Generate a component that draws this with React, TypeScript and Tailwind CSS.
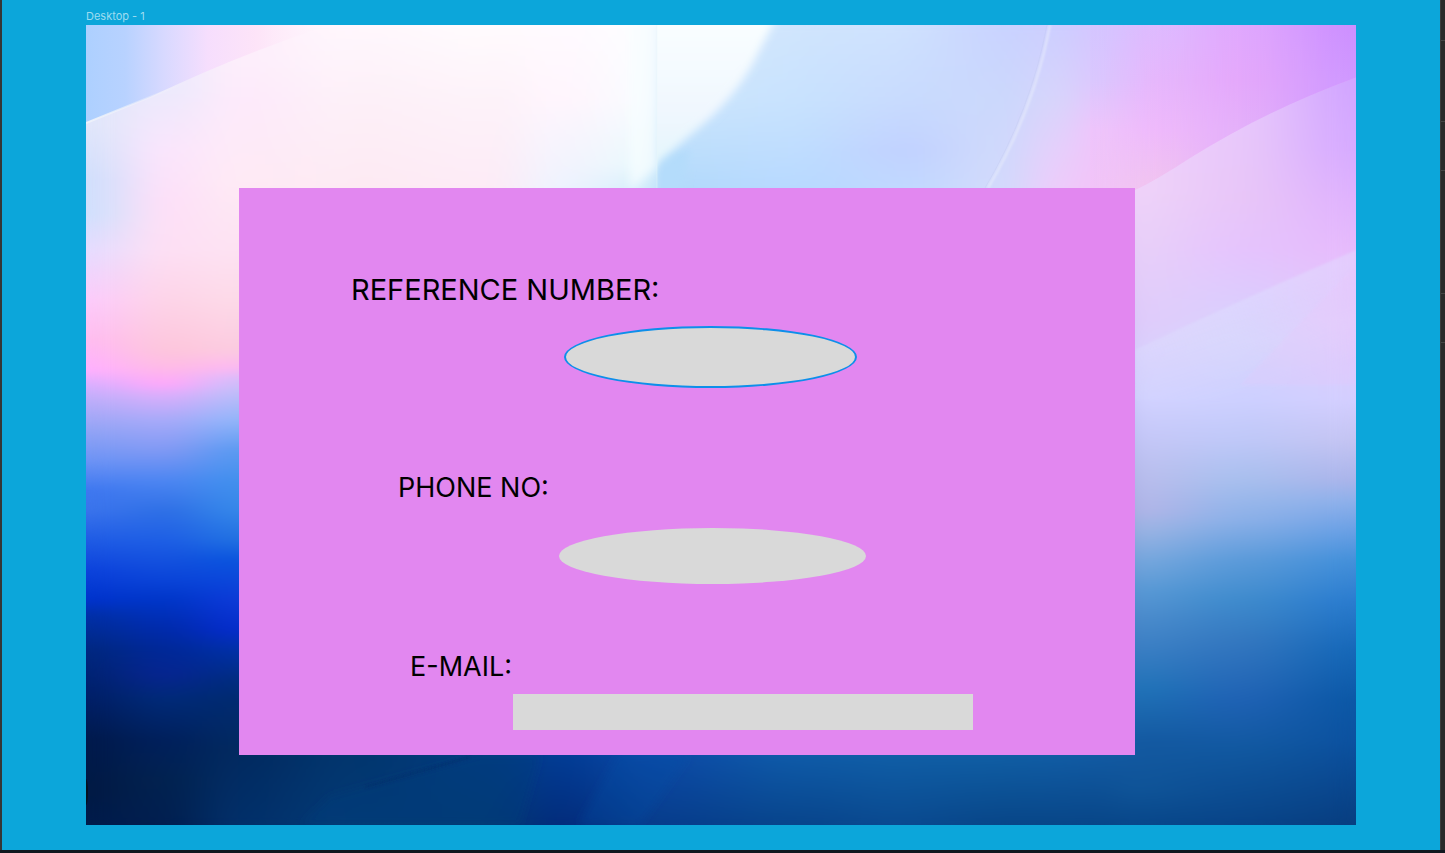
import React, { useId } from "react";

type Stop = [number, string];
type Column = { x: number; stops: Stop[] };

const TOP = 25;
const BOTTOM = 825;

const wallpaper: Column[] = [
  { x: 86, stops: [[125, "#dfe6fa"], [180, "#cfdffc"], [215, "#cfe0fd"], [250, "#e5dcff"], [300, "#fccbfb"], [340, "#ffbcf0"], [370, "#ffb0ff"], [385, "#d8b0ff"], [400, "#bdaefa"], [430, "#93a4f5"], [460, "#6e94f5"], [490, "#3f78f0"], [510, "#3b74ec"], [540, "#205ce5"], [570, "#0d43dc"], [600, "#0033cc"], [615, "#0030a8"], [650, "#002880"], [700, "#001f66"], [740, "#001a4c"], [790, "#021a44"], [825, "#001b4b"]] },
  { x: 165, stops: [[90, "#eceafc"], [150, "#fae5fc"], [200, "#fde0f8"], [250, "#fddff4"], [300, "#fdd4e8"], [350, "#fdc6dc"], [365, "#febde4"], [384, "#ffa8fb"], [395, "#dcaefb"], [420, "#a8aaf9"], [450, "#8199f4"], [480, "#4e86f2"], [510, "#2f70e6"], [540, "#1e5fe5"], [580, "#0a44d8"], [600, "#0036c8"], [625, "#002cb0"], [650, "#002898"], [675, "#062590"], [700, "#002a78"], [740, "#00205c"], [780, "#022250"], [825, "#011f50"]] },
  { x: 239, stops: [[60, "#fdeefb"], [100, "#fdeafb"], [180, "#feeaf5"], [250, "#fde2f2"], [300, "#fddae8"], [350, "#fccbe0"], [368, "#fdb8f2"], [378, "#dbbcfb"], [390, "#c4befa"], [420, "#92b5fa"], [450, "#5b9af2"], [480, "#4290ee"], [510, "#3587ea"], [540, "#2070e2"], [560, "#0a54de"], [600, "#0c3ad8"], [630, "#042ccc"], [650, "#0030a8"], [680, "#002c80"], [700, "#002a70"], [750, "#022a60"], [825, "#02306a"]] },
  { x: 350, stops: [[25, "#fff7fd"], [100, "#fdf0f8"], [188, "#fdeaf3"], [755, "#02366e"], [825, "#033a75"]] },
  { x: 490, stops: [[25, "#fffbfd"], [100, "#fdf2f9"], [188, "#fdebf6"], [755, "#023c80"], [825, "#023a75"]] },
  { x: 560, stops: [[25, "#fffaff"], [100, "#fff5fd"], [188, "#eef3fe"], [755, "#023c95"], [825, "#032c7c"]] },
  { x: 656, stops: [[25, "#fdfeff"], [100, "#f8fcff"], [165, "#e8f9fc"], [188, "#d4eefb"], [755, "#0c4aa6"], [825, "#073d8c"]] },
  { x: 658, stops: [[25, "#d8ebfc"], [100, "#cce6fc"], [188, "#b2dafb"], [755, "#0c4aa6"], [825, "#073d8c"]] },
  { x: 800, stops: [[25, "#d0e5fd"], [100, "#c8e2fe"], [188, "#b8d9ff"], [755, "#0f5ba8"], [825, "#08458c"]] },
  { x: 900, stops: [[25, "#cfe2fe"], [100, "#c8dbfe"], [150, "#c1d2ff"], [188, "#c0d8ff"], [755, "#105ea6"], [825, "#0a4a90"]] },
  { x: 1000, stops: [[25, "#c9d3ff"], [100, "#cbd8fc"], [188, "#d2dafc"], [755, "#105ea4"], [825, "#084688"]] },
  { x: 1060, stops: [[25, "#cdceff"], [100, "#d8d4fb"], [150, "#e6cffb"], [188, "#eecbfa"], [755, "#115ca4"], [825, "#084688"]] },
  { x: 1100, stops: [[25, "#d4c5ff"], [80, "#dcc6fe"], [130, "#f0c3fb"], [188, "#f2c3f8"], [755, "#125aa2"], [825, "#084688"]] },
  { x: 1135, stops: [[150, "#efd3fb"], [190, "#efd3f9"], [250, "#e8d0f9"], [320, "#e0ccfb"], [350, "#dbd0fd"], [400, "#d2d2ff"], [430, "#c8cafa"], [470, "#bcc0ef"], [510, "#b2b6e8"], [530, "#9cb4e4"], [560, "#78a8de"], [590, "#5a9ad6"], [620, "#4a8bcc"], [650, "#3a7fc4"], [690, "#2073b8"], [740, "#145aa2"], [790, "#0f5498"], [825, "#08478a"]] },
  { x: 1240, stops: [[120, "#e8c8fb"], [200, "#e8c6f8"], [250, "#e5c4fd"], [300, "#dcccfd"], [340, "#d8d4fc"], [400, "#cdd0ff"], [440, "#bfc8f8"], [480, "#a8bfee"], [520, "#8bb0e8"], [560, "#5c9bda"], [600, "#3f8bcd"], [640, "#3478c0"], [700, "#1f62b4"], [750, "#1158a0"], [825, "#084488"]] },
  { x: 1356, stops: [[80, "#d0a4ff"], [150, "#d6aaff"], [200, "#dfb2fd"], [248, "#e6bafc"], [320, "#e3cafc"], [400, "#d3ceff"], [440, "#c4c4f2"], [480, "#aab4ea"], [500, "#8fb0ea"], [530, "#6aa0e5"], [560, "#4490da"], [600, "#2b7ccf"], [650, "#1668b8"], [700, "#0c58a6"], [740, "#0c52a0"], [825, "#083e80"]] },
];

const violetCorner: Column[] = [
  { x: 1090, stops: [[25, "#d4c6ff"], [80, "#dac8fe"], [130, "#eec5fb"], [188, "#f2c4f8"]] },
  { x: 1160, stops: [[25, "#debaff"], [80, "#e6b6fc"], [130, "#eeb9fb"], [188, "#f0c4ef"]] },
  { x: 1240, stops: [[25, "#e0a8fe"], [80, "#e4a8fb"], [130, "#e4b0fa"]] },
  { x: 1356, stops: [[25, "#cc8fff"], [80, "#cf98ff"]] },
];

function ColumnBlend({ columns }: { columns: Column[] }) {
  const id = useId().replace(/[^a-zA-Z0-9]/g, "");
  return (
    <g>
      <defs>
        <linearGradient id={`${id}ramp`}>
          <stop offset="0" stopColor="#fff" stopOpacity="0" />
          <stop offset=".2" stopColor="#fff" stopOpacity=".13" />
          <stop offset=".8" stopColor="#fff" stopOpacity=".87" />
          <stop offset="1" stopColor="#fff" stopOpacity="1" />
        </linearGradient>
        <mask id={`${id}mask`} maskContentUnits="objectBoundingBox" x="0" y="0" width="1" height="1">
          <rect width="1" height="1" fill={`url(#${id}ramp)`} />
        </mask>
        {columns.map((c, i) => (
          <linearGradient key={c.x} id={`${id}c${i}`} gradientUnits="userSpaceOnUse" x1="0" x2="0" y1={TOP} y2={BOTTOM}>
            {c.stops.map(([y, color]) => (
              <stop key={y} offset={(y - TOP) / (BOTTOM - TOP)} stopColor={color} />
            ))}
          </linearGradient>
        ))}
      </defs>
      {columns.slice(0, -1).map((c, i) => {
        const box = { x: c.x, y: TOP, width: columns[i + 1].x - c.x, height: BOTTOM - TOP };
        return (
          <g key={c.x} shapeRendering="crispEdges">
            <rect {...box} fill={`url(#${id}c${i})`} />
            <rect {...box} fill={`url(#${id}c${i + 1})`} mask={`url(#${id}mask)`} />
          </g>
        );
      })}
    </g>
  );
}

function Wallpaper() {
  return (
    <svg
      className="absolute inset-0 h-full w-full"
      viewBox="86 25 1270 800"
      preserveAspectRatio="none"
      aria-hidden="true"
    >
      <defs>
        <clipPath id="corner">
          <path d="M1090 20H1360V76Q1270 108 1190 158Q1160 178 1135 190H1090Z" />
        </clipPath>
        <linearGradient id="dawn" gradientUnits="userSpaceOnUse" x1="86" x2="330" y1="0" y2="0">
          <stop offset="0" stopColor="#add0ff" />
          <stop offset=".16" stopColor="#b8d2ff" />
          <stop offset=".32" stopColor="#d8d9ff" />
          <stop offset=".5" stopColor="#f6defd" />
          <stop offset=".7" stopColor="#fde4f8" />
          <stop offset="1" stopColor="#fff5fc" stopOpacity="0" />
        </linearGradient>
        <linearGradient id="crease" gradientUnits="userSpaceOnUse" x1="86" x2="190" y1="0" y2="0">
          <stop offset="0" stopColor="#eef2fa" />
          <stop offset="1" stopColor="#f4f5fa" stopOpacity="0" />
        </linearGradient>
        <linearGradient id="glow" gradientUnits="userSpaceOnUse" x1="0" x2="0" y1="25" y2="170">
          <stop offset="0" stopColor="#f9feff" />
          <stop offset=".6" stopColor="#f0f7fe" />
          <stop offset="1" stopColor="#e2f6fc" />
        </linearGradient>
        <linearGradient id="veil" gradientUnits="userSpaceOnUse" x1="1240" x2="1270" y1="300" y2="390">
          <stop offset="0" stopColor="#dfe6ff" stopOpacity=".35" />
          <stop offset="1" stopColor="#d5dcff" stopOpacity="0" />
        </linearGradient>
        <filter id="soft1" x="-20%" y="-20%" width="140%" height="140%"><feGaussianBlur stdDeviation="1" /></filter>
        <filter id="soft4" x="-20%" y="-20%" width="140%" height="140%"><feGaussianBlur stdDeviation="4" /></filter>
        <filter id="blend" colorInterpolationFilters="sRGB"><feGaussianBlur stdDeviation="12 3" /></filter>
        <clipPath id="rightOfSeam">
          <path d="M657 20H900V200H657Z" />
        </clipPath>
      </defs>
      <ColumnBlend columns={wallpaper} />
      <g filter="url(#blend)">
        <ColumnBlend columns={wallpaper} />
      </g>
      <path d="M86 25H330Q240 54 150 97L86 123Z" fill="url(#dawn)" />
      <path d="M86 123L150 97L200 77" fill="none" stroke="url(#crease)" strokeWidth="2" />
      <path d="M630 20H657V166L630 190Z" fill="#f8fdff" fillOpacity=".7" filter="url(#soft4)" />
      <g clipPath="url(#rightOfSeam)">
        <path d="M657 150L690 150L680 200H657Z" fill="#b4dcfb" filter="url(#soft4)" />
        <path d="M640 10H780L752 65Q735 95 708 120L640 178Z" fill="url(#glow)" filter="url(#soft4)" />
      </g>
      <path d="M657 25V188" stroke="#eefbfd" strokeWidth="1" strokeOpacity=".4" />
      <path d="M1050 25Q1034 110 988 188" fill="none" stroke="#e9eefb" strokeWidth="2" strokeOpacity=".7" filter="url(#soft1)" />
      <path d="M1047 25Q1031 110 985 188" fill="none" stroke="#bcc6ea" strokeWidth="1" strokeOpacity=".3" />
      <g clipPath="url(#corner)">
        <ColumnBlend columns={violetCorner} />
      </g>
      <path d="M1135 350Q1240 300 1356 250V400H1135Z" fill="url(#veil)" filter="url(#soft1)" />
      <path d="M1356 265L1240 385L1356 385Z" fill="#efc0f8" fillOpacity=".14" filter="url(#soft1)" />
      <path d="M330 796L480 755H540L520 825H300Z" fill="#04407c" fillOpacity=".35" filter="url(#soft4)" />
      <path d="M365 787L470 757" stroke="#002a68" strokeOpacity=".35" strokeWidth="3" filter="url(#soft1)" />
      <path d="M618 755L578 825H640L690 755Z" fill="#0d50a6" fillOpacity=".25" filter="url(#soft4)" />
      <ellipse cx="86" cy="792" rx="2" ry="13" fill="#05101e" />
    </svg>
  );
}

type FieldProps = { id: string; label: string; type: string; labelClass: string; inputClass: string };

function Field({ id, label, type, labelClass, inputClass }: FieldProps) {
  return (
    <div className="flex flex-col items-start">
      <label htmlFor={id} className={`leading-9 text-black ${labelClass}`}>
        {label}
      </label>
      <input id={id} type={type} className={`max-w-full bg-[#d9d9d9] text-center text-black outline-none ${inputClass}`} />
    </div>
  );
}

export default function App() {
  return (
    <div className="flex min-h-screen flex-col bg-[#10181f] pb-[3px] font-['Inter',sans-serif]">
      <div className="flex flex-1">
        <div className="w-0.5 bg-[#353535]" />
        <main className="flex flex-1 flex-col bg-[#0ca6da] px-[84px] pt-2">
          <h1 className="text-[11px] leading-4 text-[#9edcf0]">Desktop - 1</h1>
          <section className="relative mt-px pt-[163px] pr-[221px] pb-[70px] pl-[153px]">
            <Wallpaper />
            <form className="relative flex flex-col bg-[#e287f0] pt-[84px] pb-[25px]">
              <Field
                id="reference"
                label="REFERENCE NUMBER:"
                type="text"
                labelClass="ml-[112px] text-[29px]"
                inputClass="mt-[18px] ml-[325px] h-[62px] w-[293px] rounded-[50%] border-2 border-[#0d8fea]"
              />
              <div className="mt-[82px]">
                <Field
                  id="phone"
                  label="PHONE NO:"
                  type="tel"
                  labelClass="ml-[159px] text-[27px]"
                  inputClass="mt-[22px] ml-[320px] h-[56px] w-[307px] rounded-[50%]"
                />
              </div>
              <div className="mt-[65px]">
                <Field
                  id="email"
                  label="E-MAIL:"
                  type="email"
                  labelClass="ml-[171px] text-[27px]"
                  inputClass="mt-[9px] ml-[274px] h-9 w-[460px]"
                />
              </div>
            </form>
          </section>
        </main>
        <div className="flex w-[5px] flex-col border-l border-[#3a3a3a] bg-[#292929]">
          <div className="h-[41px] border-b border-[#444]" />
          <div className="h-[81px] border-b border-[#444]" />
          <div className="h-[49px] border-b border-[#444]" />
          <div className="h-[123px] border-b border-[#444]" />
          <div className="h-[49px] border-b border-[#444]" />
        </div>
      </div>
    </div>
  );
}
